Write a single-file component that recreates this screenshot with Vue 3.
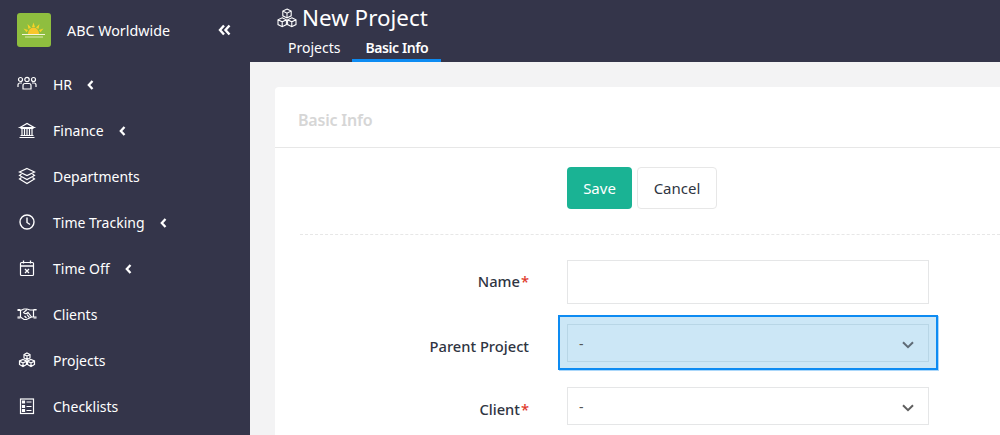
<script setup>
const items = [
  { label: 'HR', icon: 'people', arrow: true },
  { label: 'Finance', icon: 'bank', arrow: true },
  { label: 'Departments', icon: 'layers' },
  { label: 'Time Tracking', icon: 'clock', arrow: true },
  { label: 'Time Off', icon: 'calendar', arrow: true },
  { label: 'Clients', icon: 'hands' },
  { label: 'Projects', icon: 'cubes' },
  { label: 'Checklists', icon: 'list' },
]
</script>

<template>
  <div class="app">
    <aside class="sidebar">
      <div class="brand">
        <div class="logo">
          <svg width="34" height="34" viewBox="0 0 34 34">
            <path d="M16.500 9.500l1.500 4.500h-3zM10.500 11l3.500 3.500-2.500 1.500zM22.500 11l-3.500 3.500 2.500 1.500zM6.500 15.500l4.500 1.500-1.500 2.200zM26.500 15.500l-4.500 1.500 1.500 2.200z" fill="#f5d327"/>
            <path d="M11 21a5.500 6.500 0 0 1 11 0z" fill="#f9c62b"/>
            <path d="M5 21.500h23" stroke="#f4f7dc" stroke-width="1"/>
            <path d="M8 24h18" stroke="#dfeaae" stroke-width="1"/>
          </svg>
        </div>
        <span class="brand-name">ABC Worldwide</span>
        <svg class="collapse" width="13" height="12" viewBox="0 0 13 12">
          <path d="M6 1.500 2 6l4 4.500M11.500 1.500 7.500 6l4 4.500" stroke="#fff" stroke-width="2.400" fill="none"/>
        </svg>
      </div>
      <nav class="nav">
        <a v-for="item in items" :key="item.label" class="nav-item">
          <span class="nav-icon">
            <svg width="20" height="20" viewBox="0 0 20 20" fill="none" stroke="#fff" stroke-width="1.200">
              <template v-if="item.icon === 'people'">
                <circle cx="3.500" cy="5.500" r="2"/><circle cx="10" cy="5.500" r="2.200"/><circle cx="16.500" cy="5.500" r="2"/>
                <path d="M1 13v-2a2 2 0 0 1 2-2h2M19 13v-2a2 2 0 0 0-2-2h-2M6 15v-3.500a2 2 0 0 1 2-2h4a2 2 0 0 1 2 2V15z"/>
              </template>
              <template v-else-if="item.icon === 'bank'">
                <path d="M3 7.500 10 3.500l7 4zM3.500 8.500h13M5 9v6M7.500 9v6M10 9v6M12.500 9v6M15 9v6M3.500 15.500h13M2.500 17.500h15"/>
              </template>
              <template v-else-if="item.icon === 'layers'">
                <path d="M10 2.500 17.500 6 10 9.500 2.500 6z"/>
                <path d="M4.500 8 2.500 9.500 10 13.500l7.500-4L15.500 8"/>
                <path d="M4.500 11.500 2.500 13 10 17.500l7.500-4.500-2-1.500"/>
              </template>
              <template v-else-if="item.icon === 'clock'">
                <circle cx="10" cy="10" r="7" stroke-width="1.400"/>
                <path d="M10 5.500V10.500l3 2" stroke-width="1.400"/>
              </template>
              <template v-else-if="item.icon === 'calendar'">
                <rect x="3.500" y="4.500" width="13" height="13" rx="1"/>
                <path d="M3.500 8h13M6.500 2.500v3M13.500 2.500v3M8 11l4 4M12 11l-4 4" stroke-width="1.300"/>
              </template>
              <template v-else-if="item.icon === 'hands'">
                <path d="M.5 6.500h3L7 5h3l3 1h6.500M.5 13h3L7 15.500h2.500l5-2.500h5"/>
                <path d="M3.500 6v7M16.500 6v7M.5 5.500h3M.5 14h3M16.500 5.500h3M16.500 14h3"/>
                <path d="M10 5.500 6.500 8.500c1 1.500 3 1.500 4.500 0l3.500 4.500M7.500 12 9.500 14M10 10.500l2.500 3.200"/>
              </template>
              <template v-else-if="item.icon === 'cubes'">
                <path d="M10 3l3 1.500V8L10 9.500 7 8V4.500zM7 4.500 10 6l3-1.500M10 6v3.500"/>
                <path d="M6 9.500 9.500 11v3.500L6 16.500l-3.500-2V11zM2.500 11 6 13l3.500-2M6 13v3.500"/>
                <path d="M14 9.500 17.500 11v3.500L14 16.500l-3.500-2V11zM10.500 11 14 13l3.500-2M14 13v3.500"/>
              </template>
              <template v-else-if="item.icon === 'list'">
                <rect x="3.500" y="3" width="13" height="14.500"/>
                <path d="M9.500 6h5M9.500 10.500h5M9.500 14.500h5"/>
                <path d="M5.500 5h2v2h-2zM5.500 9.500h2v2h-2zM5.500 13.500h2v2h-2z" fill="#fff"/>
              </template>
            </svg>
          </span>
          <span class="nav-label">{{ item.label }}</span>
          <svg v-if="item.arrow" class="chev" width="7" height="10" viewBox="0 0 7 10">
            <path d="M5.500 1 1.800 5l3.700 4" stroke="#fff" stroke-width="2.300" fill="none"/>
          </svg>
        </a>
      </nav>
    </aside>
    <main class="main">
      <header class="topbar">
        <div class="title-row">
          <svg width="24" height="24" viewBox="0 0 20 20" fill="none" stroke="#fff" stroke-width="0.900">
            <path d="M10 2.500l3.500 1.700v4L10 10 6.500 8.200v-4zM6.500 4.200 10 6l3.500-1.800M10 6v4"/>
            <path d="M6 9.800l3.500 1.700v4L6 17.200l-3.500-1.700v-4zM2.500 11.500 6 13.200l3.500-1.700M6 13.200v4"/>
            <path d="M14 9.800l3.500 1.700v4L14 17.200l-3.500-1.700v-4zM10.500 11.500 14 13.200l3.500-1.700M14 13.200v4"/>
          </svg>
          <h1>New Project</h1>
        </div>
        <div class="tabs">
          <a class="tab">Projects</a>
          <a class="tab active">Basic Info</a>
        </div>
      </header>
      <div class="content">
        <section class="card">
          <div class="card-head">Basic Info</div>
          <div class="card-body">
            <div class="actions">
              <button class="btn save">Save</button>
              <button class="btn cancel">Cancel</button>
            </div>
            <div class="divider"></div>
            <div class="form">
              <div class="row name-row">
                <label>Name<em>*</em></label>
                <div class="input"></div>
              </div>
              <div class="row parent-row">
                <label>Parent Project</label>
                <div class="focus-ring">
                  <div class="select highlighted">
                    <span>-</span>
                    <svg width="12" height="8" viewBox="0 0 12 8"><path d="M1 1.200 6 6.200l5-5" stroke="#5f6b76" stroke-width="2" fill="none"/></svg>
                  </div>
                </div>
              </div>
              <div class="row client-row">
                <label>Client<em>*</em></label>
                <div class="select">
                  <span>-</span>
                  <svg width="12" height="8" viewBox="0 0 12 8"><path d="M1 1.200 6 6.200l5-5" stroke="#5f5f5f" stroke-width="2" fill="none"/></svg>
                </div>
              </div>
            </div>
          </div>
        </section>
      </div>
    </main>
  </div>
</template>

<style>
html, body { margin: 0; overflow: hidden; background: #f3f3f4; }
</style>

<style scoped>
.app {
  display: flex;
  width: 1000px;
  height: 435px;
  overflow: hidden;
  font-family: "Noto Sans", "Open Sans", sans-serif;
  font-size: 14px;
  color: #2f3542;
}
.sidebar {
  width: 250px;
  flex: none;
  background: #34354a;
  color: #fff;
}
.brand {
  display: flex;
  align-items: center;
  height: 60px;
  padding-left: 17px;
}
.logo {
  width: 34px;
  height: 34px;
  border-radius: 3px;
  background: #8fbe3f;
}
.logo svg { display: block; }
.brand-name { margin-left: 16px; width: 151px; font-size: 14.3px; }
.nav { display: flex; flex-direction: column; padding-top: 1px; }
.nav-item {
  display: flex;
  align-items: center;
  height: 46px;
  padding-left: 17px;
}
.nav-icon { width: 20px; height: 20px; margin-right: 16px; }
.nav-icon svg { display: block; }
.nav-label { font-size: 14px; }
.chev { margin-left: 15px; margin-top: 2px; }
.main { flex: 1; display: flex; flex-direction: column; min-width: 0; }
.topbar {
  height: 62px;
  flex: none;
  background: #34354a;
  color: #fff;
  box-sizing: border-box;
  padding-left: 25px;
}
.title-row { display: flex; align-items: center; height: 36px; gap: 3px; }
h1 { margin: 0; font-size: 22.4px; font-weight: 400; line-height: 36px; }
.tabs { display: flex; height: 26px; padding-left: 2px; box-sizing: border-box; }
.tab {
  padding: 0 11px;
  line-height: 24px;
  font-size: 14px;
}
.tab.active {
  font-weight: 600;
  letter-spacing: -0.4px;
  border-bottom: 3px solid #0d8bf2;
  height: 23px;
  padding: 0 13px;
  margin-left: 1px;
}
.content { flex: 1; padding: 25px 0 0 25px; background: #f3f3f4; }
.card { background: #fff; border-radius: 4px 0 0 0; height: 100%; }
.card-head {
  height: 61px;
  box-sizing: border-box;
  padding-left: 23px;
  line-height: 66px;
  font-size: 16px;
  font-weight: 600;
  letter-spacing: -0.2px;
  color: #d6d6d6;
  border-bottom: 1px solid #e7e7e7;
}
.card-body { padding: 19px 0 0 25px; }
.actions { display: flex; gap: 5px; padding-left: 267px; height: 42px; }
.btn {
  font: inherit;
  font-size: 15px;
  height: 42px;
  border-radius: 4px;
  padding: 0;
}
.save { width: 65px; background: #1ab394; border: 0; color: #fff; }
.cancel { width: 80px; background: #fff; border: 1px solid #e7e7e7; color: #2f3542; }
.divider { border-top: 1px dashed #e7e7e7; margin-top: 25px; }
.form { padding-top: 25px; }
.row { display: flex; align-items: center; }
label {
  width: 229px;
  text-align: right;
  margin-right: 38px;
  font-weight: 500;
  font-size: 14.7px;
}
em { color: #e0392b; font-style: normal; margin-left: 1px; }
.input {
  width: 362px;
  height: 44px;
  box-sizing: border-box;
  border: 1px solid #e5e6e7;
}
.select {
  width: 362px;
  height: 38px;
  box-sizing: border-box;
  border: 1px solid #e5e6e7;
  display: flex;
  align-items: center;
  justify-content: space-between;
  padding: 0 14px 0 11px;
  color: #555;
}
.select svg { margin-top: 3px; }
.highlighted { background: #cce7f6; border-color: #b8d6e6; }
.name-row { height: 44px; }
.name-row label { margin-bottom: 2px; }
.parent-row { margin-top: 11px; height: 55px; }
.parent-row label { margin-top: 6px; }
.focus-ring {
  margin-left: -9px;
  width: 380px;
  height: 55px;
  box-sizing: border-box;
  border: 2px solid #0d8bf2;
  box-shadow: 1px 1px 0 rgba(13, 139, 242, 0.35);
  background: #cce7f6;
  display: flex;
  align-items: flex-start;
  justify-content: center;
  padding-top: 7px;
}
.client-row { margin-top: 17px; height: 38px; }
.client-row label { margin-top: 6px; }
</style>
